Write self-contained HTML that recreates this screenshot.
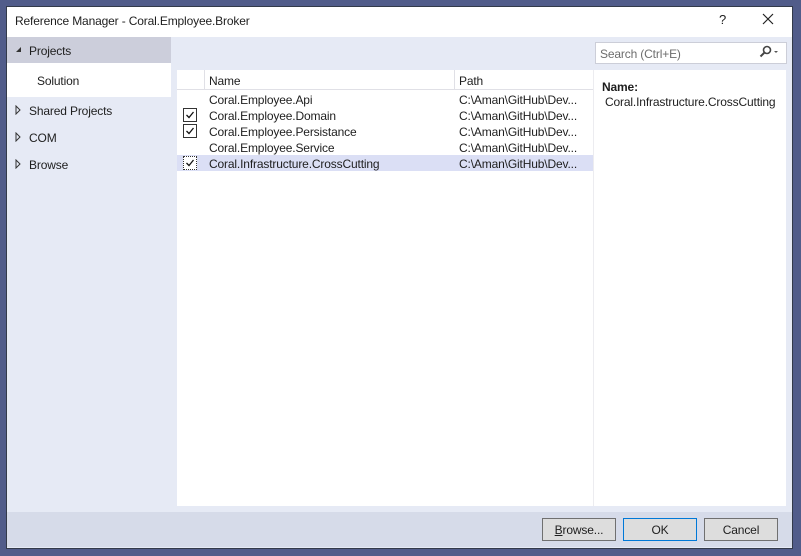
<!DOCTYPE html>
<html><head><style>
body{margin:0;width:801px;height:556px;background:#515c8a;position:relative;overflow:hidden;font-family:"Liberation Sans",sans-serif;font-size:12px;color:#1e1e1e;letter-spacing:-0.15px}
.a{position:absolute}
.dlg{left:6px;top:6px;width:785px;height:541px;border:1px solid #333a4a;background:#e6eaf5}
.cb{position:absolute;left:183px;width:12px;height:12px;border:1px solid #333;background:#fff}
.cb svg{position:absolute;left:0;top:0}
.row{position:absolute;left:177px;width:416px;height:16px;line-height:16px}
.row .n{position:absolute;left:32px;top:1px}
.row .p{position:absolute;left:282px;top:1px}
.btn{position:absolute;top:518px;width:72px;height:21px;border:1px solid #707070;background:#dddddd;text-align:center;line-height:23px;font-size:12px}
</style></head><body>
<div class="a dlg"></div>
<div class="a" style="left:7px;top:7px;width:785px;height:30px;background:#fff"></div>
<div class="a" style="left:15px;top:13px;line-height:16px">Reference Manager - Coral.Employee.Broker</div>
<div class="a" style="left:719px;top:12px;font-size:13px">?</div>
<svg class="a" style="left:762px;top:13px" width="12" height="12"><path d="M1 1L11 11M11 1L1 11" stroke="#222" stroke-width="1.2"/></svg>
<div class="a" style="left:7px;top:37px;width:164px;height:26px;background:#cccedb"></div>
<svg class="a" style="left:15px;top:46px" width="8" height="8"><path d="M1 6L6 6L6 1Z" fill="#333"/></svg>
<div class="a" style="left:29px;top:44px">Projects</div>
<div class="a" style="left:7px;top:63px;width:164px;height:34px;background:#fff"></div>
<div class="a" style="left:37px;top:74px">Solution</div>
<svg class="a" style="left:15px;top:105px" width="6" height="10"><path d="M1 1L5 5L1 9Z" fill="none" stroke="#333"/></svg>
<div class="a" style="left:29px;top:104px">Shared Projects</div>
<svg class="a" style="left:15px;top:132px" width="6" height="10"><path d="M1 1L5 5L1 9Z" fill="none" stroke="#333"/></svg>
<div class="a" style="left:29px;top:131px">COM</div>
<svg class="a" style="left:15px;top:159px" width="6" height="10"><path d="M1 1L5 5L1 9Z" fill="none" stroke="#333"/></svg>
<div class="a" style="left:29px;top:158px">Browse</div>
<div class="a" style="left:595px;top:42px;width:190px;height:20px;border:1px solid #ccced8;background:#fff"></div>
<div class="a" style="left:600px;top:46px;color:#6d6d6d;line-height:16px">Search (Ctrl+E)</div>
<svg class="a" style="left:758px;top:45px" width="28" height="14"><circle cx="9" cy="5" r="3.5" fill="none" stroke="#444" stroke-width="1.6"/><path d="M6.5 7.5L2.5 11.5" stroke="#444" stroke-width="2"/><path d="M16 6L20 6L18 8Z" fill="#555"/></svg>
<div class="a" style="left:177px;top:70px;width:416px;height:436px;background:#fff"></div>
<div class="a" style="left:594px;top:70px;width:192px;height:436px;background:#fff"></div>
<div class="a" style="left:593px;top:70px;width:1px;height:436px;background:#ececf0"></div>
<div class="a" style="left:177px;top:70px;width:416px;height:19px;border-bottom:1px solid #e0e0e6;background:#fff"></div>
<div class="a" style="left:204px;top:70px;width:1px;height:20px;background:#e0e0e6"></div>
<div class="a" style="left:454px;top:70px;width:1px;height:20px;background:#e0e0e6"></div>
<div class="a" style="left:209px;top:74px">Name</div>
<div class="a" style="left:459px;top:74px">Path</div>
<div class="row" style="top:91px"><span class="n">Coral.Employee.Api</span><span class="p">C:\Aman\GitHub\Dev...</span></div>
<div class="row" style="top:107px"><span class="n">Coral.Employee.Domain</span><span class="p">C:\Aman\GitHub\Dev...</span></div>
<div class="row" style="top:123px"><span class="n">Coral.Employee.Persistance</span><span class="p">C:\Aman\GitHub\Dev...</span></div>
<div class="row" style="top:139px"><span class="n">Coral.Employee.Service</span><span class="p">C:\Aman\GitHub\Dev...</span></div>
<div class="row" style="top:155px;background:#dbdff5"><span class="n">Coral.Infrastructure.CrossCutting</span><span class="p">C:\Aman\GitHub\Dev...</span></div>
<div class="cb" style="top:108px"><svg width="12" height="12"><path d="M2.5 6L5 8.5L9.5 3" fill="none" stroke="#111" stroke-width="1.3"/></svg></div>
<div class="cb" style="top:124px"><svg width="12" height="12"><path d="M2.5 6L5 8.5L9.5 3" fill="none" stroke="#111" stroke-width="1.3"/></svg></div>
<div class="cb" style="top:156px;border-style:dotted"><svg width="12" height="12"><path d="M2.5 6L5 8.5L9.5 3" fill="none" stroke="#111" stroke-width="1.3"/></svg></div>
<div class="a" style="left:602px;top:80px;font-weight:bold">Name:</div>
<div class="a" style="left:605px;top:95px">Coral.Infrastructure.CrossCutting</div>
<div class="a" style="left:7px;top:512px;width:785px;height:35px;background:#d6dbe9"></div>
<div class="btn" style="left:542px"><u>B</u>rowse...</div>
<div class="btn" style="left:623px;border-color:#0078d7">OK</div>
<div class="btn" style="left:704px">Cancel</div>
</body></html>
